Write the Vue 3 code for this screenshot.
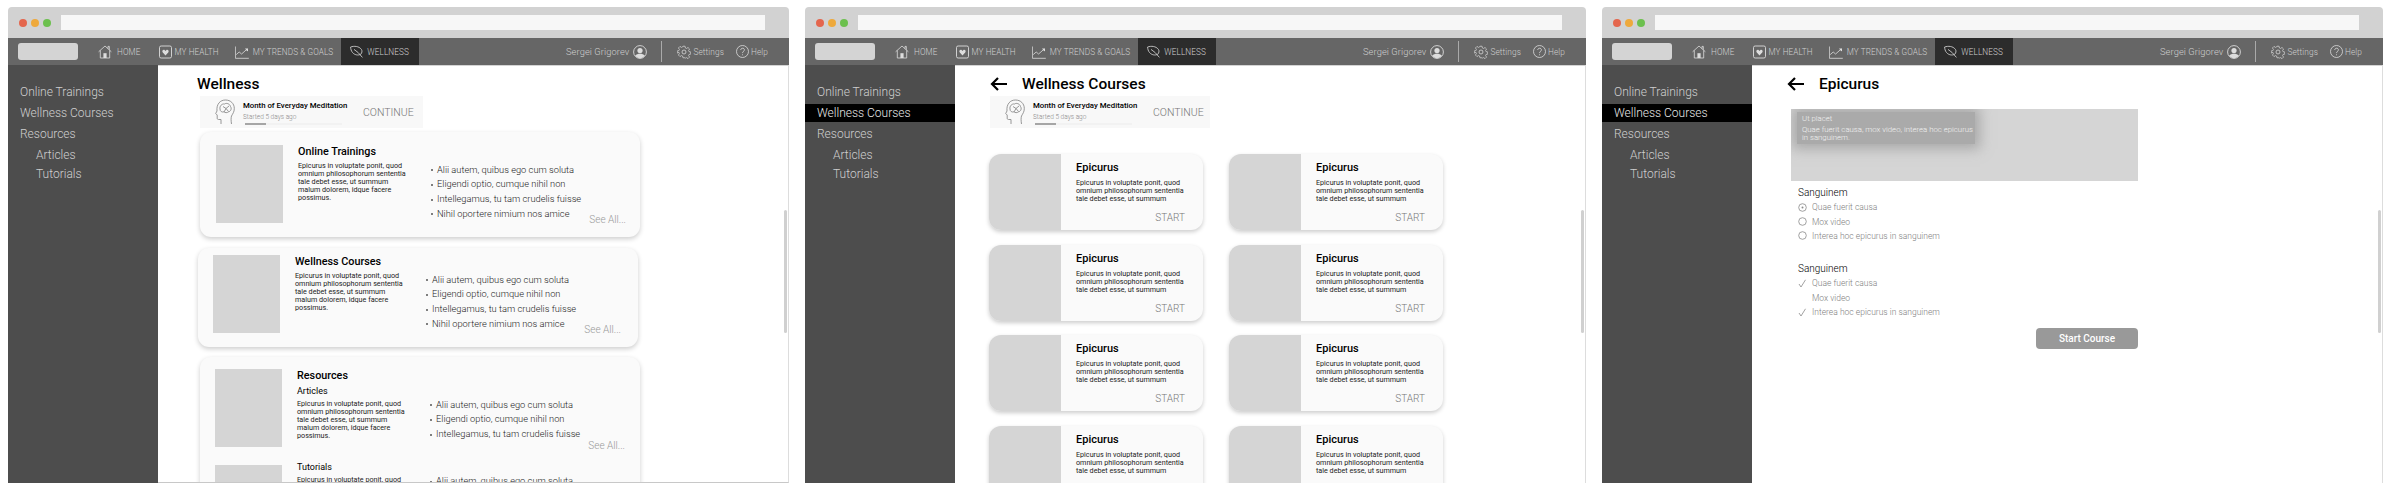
<template>
  <div class="page">
    <section v-for="screen in screens" :key="screen" class="browser">
      <div class="chrome">
        <span class="dot dot-red"></span>
        <span class="dot dot-yellow"></span>
        <span class="dot dot-green"></span>
        <div class="url"></div>
      </div>

      <nav class="topnav">
        <div class="logo"></div>
        <div class="tab tab-home">
          <svg width="14" height="14" viewBox="0 0 14 14" fill="none" stroke="#ddd" stroke-width=".8">
            <path d="M.6 6.8 7 1l6.4 5.8M2.3 5.4V13h9.4V5.4M10 3.6V1.4h1.3v3.4" />
            <rect x="5.4" y="8.2" width="3.2" height="4.8" fill="#ddd" stroke="none" />
          </svg>
          HOME
        </div>
        <div class="tab tab-health">
          <svg width="13" height="14" viewBox="0 0 13 14" fill="none" stroke="#ddd" stroke-width=".9">
            <rect x=".5" y="1" width="12" height="12" rx="1.6" />
            <path d="M6.5 10.4 3.6 7.2c-1-1.5.9-3.2 2.2-2l.7.7.7-.7c1.3-1.2 3.2.5 2.2 2Z" fill="#ddd" stroke="none" />
          </svg>
          MY HEALTH
        </div>
        <div class="tab tab-trends">
          <svg width="14" height="14" viewBox="0 0 14 14" fill="none" stroke="#ddd" stroke-width=".8">
            <path d="M.4 1.5v11.8h13.4" />
            <path d="m1.2 9.6 3-2.6 2.4 2 5.6-5" />
            <path d="M10 3.6h3v2.6l-1-.2Z" fill="#ddd" stroke="none" />
          </svg>
          MY TRENDS &amp; GOALS
        </div>
        <div class="tab tab-active">
          <svg width="13" height="13" viewBox="0 0 13 13" fill="none" stroke="#ddd" stroke-width=".8">
            <path d="M.6 2C4 .8 9 1 11.4 4.4c1 1.6.6 3.6-.6 4.8-2.8 1.6-6.4.6-8.2-1.6C1.2 6 .7 4 .6 2Z" />
            <path d="m4 4.4 4.2 3.2 4.2 4.8" />
          </svg>
          WELLNESS
        </div>

        <div class="nav-right">
          <span class="user">Sergei Grigorev</span>
          <svg class="avatar" width="14" height="14" viewBox="0 0 14 14">
            <circle cx="7" cy="7" r="6.4" fill="#666" stroke="#ddd" stroke-width=".9" />
            <circle cx="7" cy="5.6" r="2.6" fill="#ddd" />
            <path d="M2.2 10.6C3.4 9.2 5 8.8 7 8.8s3.6.4 4.8 1.8C10.6 12.4 9 13.2 7 13.2s-3.6-.8-4.8-2.6Z" fill="#ddd" />
          </svg>
          <span class="nav-divider"></span>
          <svg width="14" height="14" viewBox="0 0 24 24" fill="none" stroke="#ddd" stroke-width="1.3">
            <circle cx="12" cy="12" r="3.4" />
            <path d="M10 1h4l.7 3.4 2 .9 3-1.9 2.9 2.9-1.9 3 .9 2 3.4.7v4l-3.4.7-.9 2 1.900 3-2.900 2.900-3-1.900-2 .9L14 23h-4l-.7-3.300-2-.9-3 1.900-2.900-2.900 1.900-3-.9-2L-1 14v-4l3.400-.7.9-2-1.900-3 2.900-2.900 3 1.900 2-.9Z" transform="translate(1.200 1.200) scale(.9)" />
          </svg>
          <span class="nav-link nav-settings">Settings</span>
          <svg class="help-icon" width="13" height="13" viewBox="0 0 13 13" fill="none" stroke="#ddd" stroke-width=".8">
            <circle cx="6.500" cy="6.500" r="6" />
            <path d="M4.700 5c.1-2.400 3.800-2.300 3.700-.1 0 1.500-1.900 1.500-1.900 3.200" />
            <circle cx="6.500" cy="9.700" r=".5" fill="#ddd" stroke="none" />
          </svg>
          <span class="nav-link">Help</span>
        </div>
      </nav>

      <div class="body">
        <aside class="sidebar">
          <a class="side-item">Online Trainings</a>
          <a class="side-item" :class="{ active: screen !== 'home' }">Wellness Courses</a>
          <a class="side-item">Resources</a>
          <a class="side-item sub">Articles</a>
          <a class="side-item sub">Tutorials</a>
        </aside>

        <!-- wellness landing -->
        <main v-if="screen === 'home'" class="main main-home">
          <h1 class="page-title">Wellness</h1>
          <div class="continue continue-home">
            <svg class="head-icon" width="20" height="26" viewBox="0 0 20 26" fill="none" stroke="#8c8c8c" stroke-width=".9">
              <path d="M6 25v-4.500H3.500c-1 0-1.400-.7-1.300-1.500v-3L.7 14.500 2 12C1.300 5 5.200 1 10.500 1 15.500 1 19.300 4.500 19.300 9.500c0 3.500-1.500 5-2.800 7.500-.6 2-.5 5 0 8" />
              <path d="M5 10c-.6-3 2-5.500 4.500-5 2-1.500 5.500 0 6 2.500 1.500 2 .3 5-2 5.300-1.500 1.300-3.500 1-4.500 0C7 13.500 5 12.500 5 10Zm3-2.500 3 2 3-2.500M9 13l2-3.500 2.500 3" />
            </svg>
            <div class="continue-copy">
              <div class="continue-title">Month of Everyday Meditation</div>
              <div class="continue-meta">Started 5 days ago</div>
              <div class="progress"><span></span></div>
            </div>
            <span class="continue-link">CONTINUE</span>
          </div>

          <article class="card card-trainings">
            <div class="ov-row">
              <div class="thumb"></div>
              <div class="ov-copy">
                <h2>Online Trainings</h2>
                <p class="lorem">{{ lorem }}</p>
              </div>
              <div class="ov-side">
                <ul><li v-for="b in bullets" :key="b">{{ b }}</li></ul>
                <a class="see-all">See All...</a>
              </div>
            </div>
          </article>

          <article class="card card-courses">
            <div class="ov-row">
              <div class="thumb"></div>
              <div class="ov-copy">
                <h2>Wellness Courses</h2>
                <p class="lorem">{{ lorem }}</p>
              </div>
              <div class="ov-side">
                <ul><li v-for="b in bullets" :key="b">{{ b }}</li></ul>
                <a class="see-all">See All...</a>
              </div>
            </div>
          </article>

          <article class="card card-resources">
            <div class="ov-row">
              <div class="thumb"></div>
              <div class="ov-copy">
                <h2>Resources</h2>
                <h3>Articles</h3>
                <p class="lorem">{{ lorem }}</p>
              </div>
              <div class="ov-side">
                <ul><li v-for="b in bullets.slice(0, 3)" :key="b">{{ b }}</li></ul>
                <a class="see-all">See All...</a>
              </div>
            </div>
            <div class="ov-row ov-row-second">
              <div class="thumb"></div>
              <div class="ov-copy">
                <h3>Tutorials</h3>
                <p class="lorem">{{ lorem }}</p>
              </div>
              <div class="ov-side">
                <ul><li v-for="b in bullets.slice(0, 3)" :key="b">{{ b }}</li></ul>
              </div>
            </div>
          </article>
          <div class="scrollbar"></div>
        </main>

        <!-- course list -->
        <main v-else-if="screen === 'courses'" class="main">
          <div class="back-head">
            <svg class="back" width="17" height="14" viewBox="0 0 17 14" fill="none" stroke="#000" stroke-width="2.200">
              <path d="M17 7H2M8 1 2 7l6 6" />
            </svg>
            <h1 class="page-title">Wellness Courses</h1>
          </div>
          <div class="continue">
            <svg class="head-icon" width="20" height="26" viewBox="0 0 20 26" fill="none" stroke="#8c8c8c" stroke-width=".9">
              <path d="M6 25v-4.500H3.500c-1 0-1.400-.7-1.300-1.500v-3L.7 14.500 2 12C1.300 5 5.200 1 10.500 1 15.500 1 19.300 4.500 19.300 9.500c0 3.500-1.500 5-2.800 7.500-.6 2-.5 5 0 8" />
              <path d="M5 10c-.6-3 2-5.500 4.500-5 2-1.500 5.500 0 6 2.500 1.500 2 .3 5-2 5.300-1.500 1.300-3.500 1-4.500 0C7 13.500 5 12.500 5 10Zm3-2.500 3 2 3-2.500M9 13l2-3.500 2.500 3" />
            </svg>
            <div class="continue-copy">
              <div class="continue-title">Month of Everyday Meditation</div>
              <div class="continue-meta">Started 5 days ago</div>
              <div class="progress"><span></span></div>
            </div>
            <span class="continue-link">CONTINUE</span>
          </div>
          <div class="course-grid">
            <article v-for="n in 8" :key="n" class="course">
              <div class="course-img"></div>
              <div class="course-body">
                <h2>Epicurus</h2>
                <p class="lorem">{{ loremShort }}</p>
                <span class="start">START</span>
              </div>
            </article>
          </div>
          <div class="scrollbar"></div>
        </main>

        <!-- course detail -->
        <main v-else class="main">
          <div class="back-head">
            <svg class="back" width="17" height="14" viewBox="0 0 17 14" fill="none" stroke="#000" stroke-width="2.200">
              <path d="M17 7H2M8 1 2 7l6 6" />
            </svg>
            <h1 class="page-title">Epicurus</h1>
          </div>
          <div class="detail">
            <div class="video">
              <div class="caption">
                <div>Ut placet</div>
                <div class="caption-text">Quae fuerit causa, mox video, interea hoc epicurus in sanguinem.</div>
              </div>
            </div>
            <h3 class="q-title q-first">Sanguinem</h3>
            <div v-for="(o, i) in options" :key="o" class="option">
              <svg width="9" height="9" viewBox="0 0 9 9" fill="none" stroke="#8a8a8a" stroke-width=".8">
                <circle cx="4.500" cy="4.500" r="3.800" />
                <circle v-if="i === 0" cx="4.500" cy="4.500" r="1" fill="#8a8a8a" stroke="none" />
              </svg>
              {{ o }}
            </div>
            <h3 class="q-title">Sanguinem</h3>
            <div v-for="(o, i) in options" :key="o" class="option">
              <svg width="9" height="9" viewBox="0 0 9 9" fill="none" stroke="#8a8a8a" stroke-width=".8">
                <path v-if="i !== 1" d="m1 5 2 3L7.500 .8" />
              </svg>
              {{ o }}
            </div>
            <div class="actions">
              <button class="start-btn">Start Course</button>
            </div>
          </div>
          <div class="scrollbar"></div>
        </main>
      </div>
    </section>
  </div>
</template>

<script setup>
const screens = ['home', 'courses', 'detail']

const lorem =
  'Epicurus in voluptate ponit, quod omnium philosophorum sententia tale debet esse, ut summum malum dolorem, idque facere possimus.'
const loremShort = 'Epicurus in voluptate ponit, quod omnium philosophorum sententia tale debet esse, ut summum'

const bullets = [
  'Alii autem, quibus ego cum soluta',
  'Eligendi optio, cumque nihil non',
  'Intellegamus, tu tam crudelis fuisse',
  'Nihil oportere nimium nos amice',
]

const options = ['Quae fuerit causa', 'Mox video', 'Interea hoc epicurus in sanguinem']
</script>

<style>
html,
body {
  margin: 0;
  background: #fff;
}
</style>

<style scoped>
.page {
  display: grid;
  grid-template-columns: repeat(3, 781px);
  gap: 16px;
  width: 2390px;
  height: 492px;
  padding: 7px 0 0 8px;
  box-sizing: border-box;
  overflow: hidden;
  font-family: Roboto, 'Liberation Sans', sans-serif;
  color: #000;
}

.browser {
  height: 476px;
  display: flex;
  flex-direction: column;
  overflow: hidden;
  border-radius: 4px 4px 0 0;
}

.chrome {
  flex: 0 0 31px;
  background: #d2d2d2;
  display: flex;
  align-items: center;
  padding-left: 11px;
  gap: 4px;
}
.dot {
  width: 8px;
  height: 8px;
  border-radius: 50%;
}
.dot-red {
  background: #e4664d;
}
.dot-yellow {
  background: #eea93c;
}
.dot-green {
  background: #6cc04e;
}
.url {
  width: 704px;
  height: 15px;
  margin-left: 6px;
  margin-top: -1px;
  background: #f7f7f7;
}

.topnav {
  flex: 0 0 27px;
  background: #666;
  display: flex;
  align-items: center;
  padding-left: 10px;
  color: #cfcfcf;
  font-size: 8.200px;
  font-weight: 300;
  letter-spacing: 0.1px;
}
.logo {
  width: 60px;
  height: 17px;
  margin-right: 12px;
  background: #d4d4d4;
  border-radius: 3px;
}
.tab {
  height: 100%;
  display: flex;
  align-items: center;
  white-space: nowrap;
}
.tab-home {
  padding: 0 8px;
  gap: 5px;
}
.tab-health {
  padding: 0 8px;
  margin-left: 3px;
  gap: 2px;
}
.tab-trends {
  padding: 0 8px;
  gap: 4px;
}
.tab-active {
  padding: 0 10px 0 9px;
  gap: 4px;
  background: #2c2c2c;
}
.nav-right {
  margin-left: auto;
  padding-right: 21px;
  display: flex;
  align-items: center;
  font-size: 9.300px;
}
.avatar {
  margin-left: 4px;
}
.nav-divider {
  width: 1px;
  height: 21px;
  margin: 0 15px 0 14px;
  background: #aaa;
}
.nav-link {
  margin-left: 2px;
  font-size: 8.300px;
}
.nav-settings {
  margin-right: 12px;
}
.help-icon {
  flex: none;
}

.body {
  flex: 1;
  min-height: 0;
  display: flex;
}

.sidebar {
  flex: 0 0 150px;
  background: #4d4d4d;
  padding-top: 18px;
  box-sizing: border-box;
  color: #cfcfcf;
  font-size: 12px;
  font-weight: 300;
}
.side-item {
  display: block;
  height: 18px;
  line-height: 18px;
  margin-bottom: 3px;
  padding-left: 12px;
}
.side-item.active {
  background: #000;
  color: #e6e6e6;
}
.side-item.sub {
  padding-left: 28px;
  margin-bottom: 1px;
}

.main {
  flex: 1;
  position: relative;
  min-width: 0;
  padding-left: 35px;
  overflow: hidden;
  background: #fff;
  border-top: 1px solid #d4d4d4;
  border-right: 1px solid #ddd;
}
.main-home {
  padding-left: 39px;
  border-bottom: 1px solid #c8c8c8;
}
.scrollbar {
  position: absolute;
  right: 1px;
  top: 144px;
  width: 3px;
  height: 123px;
  background: #d0d0d0;
  border-radius: 2px;
}

.page-title {
  margin: 0;
  font-size: 15.500px;
  line-height: 24px;
  font-weight: 500;
}
.main-home .page-title {
  padding-top: 6px;
}
.back-head {
  display: flex;
  align-items: center;
  gap: 15px;
  padding-top: 6px;
}
.back {
  flex: none;
}

.continue {
  width: 220px;
  height: 32px;
  box-sizing: border-box;
  background: #f8f8f8;
  display: flex;
  align-items: center;
  padding-left: 15px;
}
.continue-home {
  width: 223px;
  margin-left: 3px;
}
.head-icon {
  flex: none;
}
.continue-copy {
  width: 120px;
  margin-left: 8px;
  padding-top: 1px;
}
.continue-title {
  font-size: 7.800px;
  line-height: 10px;
  font-weight: 500;
  white-space: nowrap;
}
.continue-meta {
  font-size: 6.500px;
  line-height: 10px;
  margin-top: 1px;
  font-weight: 300;
  color: #888;
}
.progress {
  width: 97px;
  height: 2px;
  margin-top: 1px;
  margin-left: 2px;
  background: #f2f2f2;
}
.progress span {
  display: block;
  width: 21px;
  height: 2px;
  background: #a6a6a6;
}
.continue-link {
  font-size: 10.500px;
  font-weight: 300;
  color: #777;
}

.card {
  width: 440px;
  box-sizing: border-box;
  background: #fafafa;
  border-radius: 11px;
  box-shadow: 0 2px 5px rgba(0, 0, 0, 0.2);
}
.card-trainings {
  height: 105px;
  margin: 4px 0 0 3px;
  padding: 13px 0 0 16px;
}
.card-courses {
  height: 99px;
  margin: 11px 0 0 1px;
  padding: 7px 0 0 15px;
}
.card-resources {
  height: 200px;
  margin: 10px 0 0 3px;
  padding: 12px 0 0 15px;
}
.ov-row {
  display: flex;
}
.ov-row-second {
  margin-top: 13px;
}
.thumb {
  flex: 0 0 67px;
  height: 78px;
  margin-right: 15px;
  background: #d5d5d5;
}
.ov-copy {
  flex: 0 0 133px;
}
.card-courses .ov-copy {
  flex-basis: 131px;
}
.ov-copy h2 {
  margin: 0;
  font-size: 10.800px;
  line-height: 14px;
  font-weight: 500;
}
.ov-copy h3 {
  margin: 2px 0 0;
  font-size: 9px;
  line-height: 12px;
  font-weight: 400;
}
.ov-row-second .ov-copy h3 {
  margin-top: -4px;
}
.lorem {
  width: 109px;
  margin: 3px 0 0;
  font-size: 7.200px;
  line-height: 8.100px;
  font-weight: 400;
  color: #222;
}
.ov-side {
  flex: 0 0 195px;
  display: flex;
  flex-direction: column;
  padding-top: 17.600px;
  box-sizing: border-box;
}
.ov-side ul {
  margin: 0;
  padding: 0 0 0 6px;
  list-style: none;
}
.ov-side li {
  position: relative;
  font-size: 9.300px;
  line-height: 14.700px;
  font-weight: 300;
  white-space: nowrap;
  color: #1a1a1a;
}
.ov-side li::before {
  content: '';
  position: absolute;
  left: -6px;
  top: 6.500px;
  width: 2px;
  height: 2px;
  border-radius: 50%;
  background: #555;
}
.see-all {
  align-self: flex-end;
  margin-top: -7px;
  font-size: 10px;
  line-height: 12px;
  font-weight: 300;
  color: #999;
}
.card-resources .ov-side {
  padding-top: 28.600px;
}
.card-resources .see-all {
  margin-top: -2px;
}
.card-resources .ov-row-second .ov-side {
  padding-top: 9.600px;
}

.course-grid {
  display: grid;
  grid-template-columns: repeat(2, 214px);
  grid-auto-rows: 76px;
  column-gap: 26px;
  row-gap: 14.600px;
  margin: 26px 0 0 -1px;
}
.course {
  display: flex;
  background: #fafafa;
  border-radius: 12px;
  overflow: hidden;
  box-shadow: 0 2px 4px rgba(0, 0, 0, 0.2);
}
.course-img {
  flex: 0 0 72px;
  background: #d5d5d5;
}
.course-body {
  flex: 1;
  padding: 7px 19px 0 15px;
  display: flex;
  flex-direction: column;
}
.course-body h2 {
  margin: 0;
  font-size: 11px;
  line-height: 14px;
  font-weight: 500;
}
.course-body .lorem {
  margin-top: 4px;
}
.start {
  align-self: flex-end;
  margin-top: 8px;
  font-size: 10px;
  line-height: 14px;
  font-weight: 300;
  color: #777;
}

.detail {
  width: 347px;
  margin: 13px 0 0 4px;
}
.video {
  height: 72px;
  background: #d5d5d5;
  overflow: hidden;
}
.caption {
  width: 178px;
  height: 32px;
  margin: 3px 0 0 6px;
  padding: 3px 0 0 5px;
  box-sizing: border-box;
  background: rgba(135, 135, 135, 0.55);
  box-shadow: 0 0 12px 5px rgba(135, 135, 135, 0.55);
  color: #f2f2f2;
  font-size: 7.800px;
  line-height: 8.500px;
  font-weight: 300;
}
.caption-text {
  margin-top: 2px;
}
.q-title {
  margin: 20px 0 1px 7px;
  font-size: 10px;
  line-height: 12px;
  font-weight: 300;
}
.q-first {
  margin-top: 6px;
}
.option {
  height: 14.400px;
  margin-left: 7px;
  display: flex;
  align-items: center;
  gap: 5px;
  font-size: 8.500px;
  font-weight: 300;
  color: #808080;
}
.option svg {
  flex: none;
}
.actions {
  display: flex;
  justify-content: flex-end;
  margin-top: 9px;
}
.start-btn {
  width: 102px;
  height: 21px;
  border: 0;
  border-radius: 4px;
  background: #999;
  color: #fff;
  font-family: inherit;
  font-size: 10px;
  font-weight: 500;
}
</style>
